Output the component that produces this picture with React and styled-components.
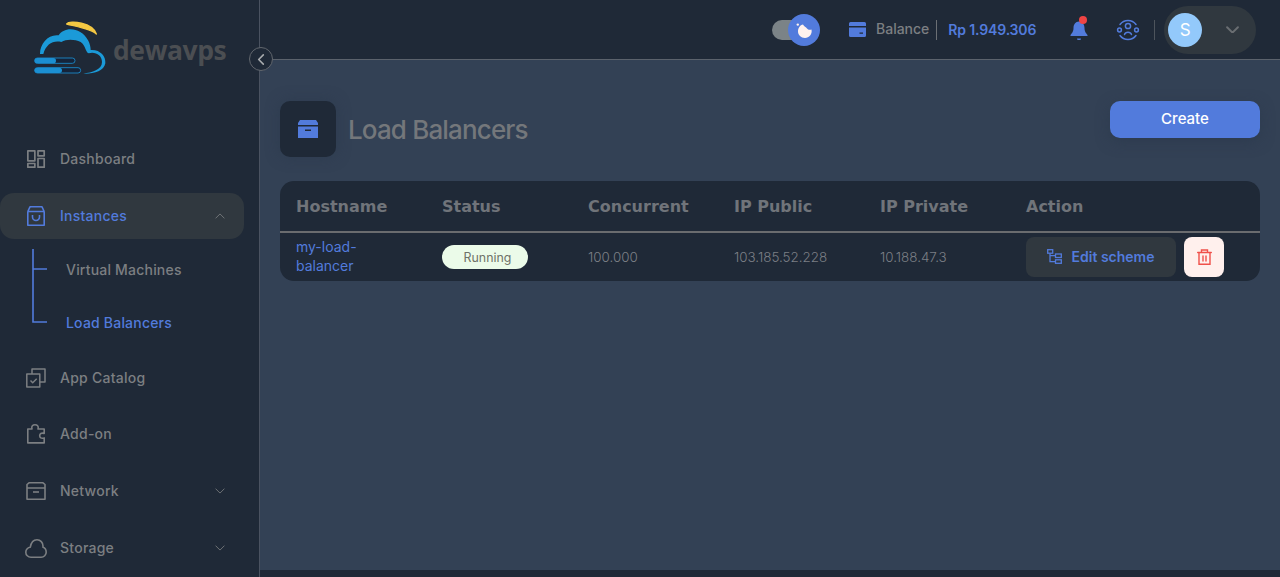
import React from 'react';
import styled, { createGlobalStyle } from 'styled-components';

const Global = createGlobalStyle`
  html, body { margin: 0; padding: 0; height: 100%; overflow: hidden; background: #334155; }
  * { box-sizing: border-box; }
`;
const BLUE = '#527bdc';
const GRAY = '#7c7f82';
const BASE = '#1f2937';

const Page = styled.div`
  display: flex; height: 577px; width: 1280px; position: relative;
  font-family: Inter, "Liberation Sans", sans-serif; font-size: 14px; color: ${GRAY};
`;
const Sidebar = styled.aside`
  width: 260px; flex: none; background: ${BASE}; border-right: 1px solid #4a5260; overflow: hidden;
`;
const LogoRow = styled.div`
  height: 136px; padding: 20px 0 0 34px; display: flex; align-items: flex-start; gap: 5px;
`;
const LogoText = styled.span`
  font-family: "Open Sans", sans-serif; font-weight: 700; font-size: 26.5px; line-height: 1; letter-spacing: -0.4px;
  color: #4b4e52; margin-top: 17px;
`;
const NavItem = styled.div`
  height: 46px; width: 244px; display: flex; align-items: center; padding: 0 19px 0 26px; gap: 14px;
  border-radius: 14px; margin-bottom: ${p => p.$mb ?? 11}px;
  background: ${p => (p.$active ? '#30383f' : 'transparent')};
  color: ${p => (p.$active ? BLUE : GRAY)};
`;
const NavLabel = styled.span`flex: 1; font-weight: 500; letter-spacing: .25px; padding-bottom: 2px;`;
const IconSlot = styled.span`
  width: 20px; height: 22px; flex: none; display: flex; align-items: center; justify-content: center;
  svg { display: block; overflow: visible; }
`;
const SubNav = styled.div`
  position: relative; margin-bottom: 10px; height: 106px; padding: 4px 0 0 66px; letter-spacing: .2px;
`;
const SubItem = styled.div`
  height: 53px; display: flex; align-items: center; font-weight: 500;
  color: ${p => (p.$active ? BLUE : GRAY)};
`;
const Tree = styled.svg`position: absolute; left: 32px; top: 10px;`;
const Collapse = styled.button`
  position: absolute; z-index: 2; left: 249px; top: 47px; width: 24px; height: 24px; border-radius: 50%; padding: 0;
  background: ${BASE}; border: 1px solid #62676e; display: flex; align-items: center; justify-content: center; color: #a8abae;
`;
const Content = styled.div`flex: 1; display: flex; flex-direction: column; min-width: 0;`;
const TopBar = styled.header`
  height: 60px; flex: none; background: ${BASE}; border-bottom: 1px solid #5b626c;
  display: flex; align-items: center; padding: 0 24px 0 512px;
`;
const ThemeToggle = styled.div`
  width: 49px; height: 32px; position: relative; margin-right: 28px; flex: none;
`;
const Track = styled.div`
  position: absolute; left: 0; top: 6px; width: 30px; height: 20px; border-radius: 10px; background: #7b8387;
`;
const Knob = styled.div`
  position: absolute; left: 16px; top: 0; width: 32px; height: 32px; border-radius: 50%; background: ${BLUE};
  display: flex; align-items: center; justify-content: center;
`;
const BalanceLabel = styled.span`margin-left: 10px; padding-bottom: 2px; font-weight: 500; color: ${GRAY};`;
const Divider = styled.span`
  width: 1px; height: 20px; background: ${p => p.$c || '#6b6f74'}; margin: ${p => p.$m || '0 11px 0 7px'}; flex: none;
`;
const Amount = styled.span`color: ${BLUE}; font-weight: 600; white-space: nowrap; letter-spacing: -.15px; padding-bottom: 1px;`;
const TopIcon = styled.span`
  display: flex; flex: none; margin-left: ${p => p.$ml}px; position: relative;
`;
const Dot = styled.span`
  position: absolute; top: -3px; right: 2px; width: 8px; height: 8px; border-radius: 50%; background: #ef4444;
`;
const UserPill = styled.div`
  width: 92px; height: 48px; border-radius: 24px; background: #30383f; display: flex; align-items: center;
  padding-left: 4px; gap: 24px; flex: none;
`;
const Avatar = styled.div`
  width: 34px; height: 34px; border-radius: 50%; background: #93c9fb; color: #fff; font-size: 17px;
  display: flex; align-items: center; justify-content: center; flex: none;
`;
const Main = styled.main`
  flex: 1; min-height: 0; background: #334155; padding: 41px 20px 0;
  border-bottom: 7px solid ${BASE};
`;
const TitleRow = styled.div`display: flex; justify-content: space-between; align-items: flex-start; margin-bottom: 24px;`;
const TitleGroup = styled.div`display: flex; align-items: center; gap: 12px;`;
const TitleIcon = styled.div`
  width: 56px; height: 56px; border-radius: 10px; background: ${BASE}; display: flex; align-items: center; justify-content: center;
  box-shadow: 0 0 14px rgba(40, 54, 74, .5);
`;
const Title = styled.h1`
  margin: 0; font-size: 26px; font-weight: 500; color: #74777b; letter-spacing: -0.85px;
`;
const CreateButton = styled.button`
  width: 150px; height: 37px; border: 0; border-radius: 10px; background: ${BLUE}; color: #fff; padding: 0 0 2px;
  font: 500 15px Inter, sans-serif; box-shadow: 0 4px 14px rgba(40, 54, 74, .5);
`;
const TableCard = styled.div`
  background: ${BASE}; border-radius: 14px; overflow: hidden;
`;
const Table = styled.table`
  width: 100%; border-collapse: collapse; table-layout: fixed;
`;
const Th = styled.th`
  height: 51px; text-align: left; padding: 0 16px; width: ${p => p.$w || 146}px;
  font: 700 16px "DejaVu Sans", sans-serif; color: #70747a; border-bottom: 2px solid #6a6c6f;
`;
const Td = styled.td`
  height: 49px; padding: 0 16px; font-size: 13.4px; font-weight: 300; line-height: 19px; color: #7b7f85;
`;
const HostLink = styled.a`color: ${BLUE}; font-size: 14px; font-weight: 400; display: block; width: 80px; margin-top: -2px;`;
const Pill = styled.span`
  display: flex; width: 86px; height: 24px; border-radius: 12px; background: #ebfbe9; color: #6f7268; font-size: 12.4px; font-weight: 400;
  align-items: center; justify-content: center; padding-left: 5px;
`;
const Actions = styled.div`display: flex; gap: 8px;`;
const EditButton = styled.button`
  width: 150px; height: 40px; border: 0; border-radius: 8px; background: #30383f; color: ${BLUE};
  display: flex; align-items: center; justify-content: center; gap: 10px; font: 600 14px Inter, sans-serif; padding: 0 1px 1px 0;
`;
const DeleteButton = styled.button`
  width: 40px; height: 40px; border: 0; border-radius: 8px; background: #fff0ed; display: flex; align-items: center; justify-content: center; padding: 0;
`;

const S = { fill: 'none', stroke: 'currentColor', strokeWidth: 1.6, strokeLinecap: 'round', strokeLinejoin: 'round' };

const Logo = () => (
  <svg width="74" height="55" viewBox="42 30 222 165">
    <path d="M60 132C60 100 85 72 116 76 130 50 182 48 205 92 210 102 212 112 212 120 240 118 258 138 256 160 252 184 222 192 190 191 216 187 246 180 246 156 246 136 226 124 206 130 196 126 198 108 182 96 165 88 140 86 124 96 100 90 78 102 70 132Z" fill="#1b9ad8" />
    <path d="M140 42C150 30 218 38 229 72 215 58 170 50 140 42Z" fill="#f4c843" stroke="#f4c843" strokeWidth="4" strokeLinejoin="round" />
    <rect x="44" y="144" width="121" height="16" rx="8" fill="#15243a" stroke="#1b8fd2" strokeWidth="2.500" />
    <rect x="44" y="144" width="64" height="16" rx="8" fill="#1b8fd2" />
    <rect x="44" y="173" width="138" height="16" rx="8" fill="#15243a" stroke="#1b8fd2" strokeWidth="2.500" />
    <rect x="44" y="173" width="82" height="16" rx="8" fill="#1b8fd2" />
  </svg>
);
const Dashboard = () => (
  <svg width="18" height="18" viewBox="0 0 18 18" {...S} strokeLinecap="butt" strokeWidth="1.7">
    <rect x=".85" y=".85" width="7" height="10" /><rect x="11" y=".85" width="6.200" height="5" />
    <rect x=".85" y="13.500" width="7" height="3.700" /><rect x="11" y="8.500" width="6.200" height="8.700" />
  </svg>
);
const Bag = () => (
  <svg width="18" height="20" viewBox="0 0 18 20" {...S} strokeLinecap="butt">
    <path d="M.8 5.500h16.400v13.700H.8ZM.8 5.500 3 .8h12l2.200 4.700" /><path d="M5.500 9v2a3.500 3.500 0 0 0 7 0V9" />
  </svg>
);
const Catalog = () => (
  <svg width="20" height="20" viewBox="0 0 20 20" {...S} strokeLinecap="butt" strokeWidth="1.500">
    <rect x=".8" y="6" width="13" height="13" /><path d="M6 6V1h13v13h-5" /><path d="m4.500 12.500 2.200 2.200 4-4" />
  </svg>
);
const Puzzle = () => (
  <svg width="18" height="20" viewBox="0 0 18 20" {...S} strokeLinecap="butt">
    <path d="M.8 5h4.200c-1-3 1-4.200 3-4.200S12 2 11 5h6.200v4.500c-3-1-4.500.3-4.500 2.200s1.500 3.200 4.500 2.200v5H.8Z" />
  </svg>
);
const Box = ({ size = 20 }) => (
  <svg width={size} height={size * 18 / 20} viewBox="0 0 20 18" {...S} strokeLinecap="butt">
    <path d="M1 6V2.500L3 .8h14l2 1.700V6ZM1 6v11.200h18V6" /><path d="M7 10h6" />
  </svg>
);
const Cloud = () => (
  <svg width="22" height="19" viewBox="0 0 22 19" {...S}>
    <path d="M6 18.200C3 18.200.8 16 .8 13.200.8 10.400 3 8.300 5.300 8.200 6 4 8.500.8 12 .8c3.500 0 6 2.700 6 6.200 0 .5 0 .8 0 1.200 2 .6 3.200 2.500 3.200 5 0 2.800-2.300 5-5 5Z" />
  </svg>
);
const Chevron = ({ up, w = 10, color = GRAY, sw = 1 }) => (
  <svg width={w} height={w * 0.6} viewBox="0 0 12 7" fill="none" stroke={color} strokeWidth={sw} strokeLinecap="round" strokeLinejoin="round">
    <path d={up ? 'M1 6l5-5 5 5' : 'M1 1l5 5 5-5'} />
  </svg>
);

const columns = ['Hostname', 'Status', 'Concurrent', 'IP Public', 'IP Private', 'Action'];

export default function App() {
  return (
    <Page>
      <Global />
      <Sidebar>
        <LogoRow><Logo /><LogoText>dewavps</LogoText></LogoRow>
        <NavItem><IconSlot><Dashboard /></IconSlot><NavLabel>Dashboard</NavLabel></NavItem>
        <NavItem $active $mb={0}><IconSlot><Bag /></IconSlot><NavLabel>Instances</NavLabel><Chevron up /></NavItem>
        <SubNav>
          <Tree width="16" height="76" viewBox="0 0 16 76" fill="none" stroke={BLUE} strokeWidth="1.600">
            <path d="M1 0v73h14M1 20h14" />
          </Tree>
          <SubItem>Virtual Machines</SubItem>
          <SubItem $active>Load Balancers</SubItem>
        </SubNav>
        <NavItem $mb={10}><IconSlot><Catalog /></IconSlot><NavLabel>App Catalog</NavLabel></NavItem>
        <NavItem><IconSlot><Puzzle /></IconSlot><NavLabel>Add-on</NavLabel></NavItem>
        <NavItem><IconSlot><Box /></IconSlot><NavLabel>Network</NavLabel><Chevron /></NavItem>
        <NavItem><IconSlot><Cloud /></IconSlot><NavLabel>Storage</NavLabel><Chevron /></NavItem>
      </Sidebar>
      <Collapse aria-label="Collapse">
        <svg width="8" height="11" viewBox="0 0 8 12" fill="none" stroke="currentColor" strokeWidth="1.700" strokeLinecap="round" strokeLinejoin="round"><path d="M6.500 1 1.500 6l5 5" /></svg>
      </Collapse>
      <Content>
        <TopBar>
          <ThemeToggle>
            <Track />
            <Knob>
              <svg width="18" height="18" viewBox="0 0 18 18" fill="#fff2ee">
                <path d="M8 3.500C9 5.500 11 6 12 7.500 13 9 15 9 16.500 8.500 17.500 13 14 17 10 17 6 17 3 14 3 10.500 3 7 5 4 8 3.500Z" /><circle cx="2.800" cy="3.600" r="1.200" />
              </svg>
            </Knob>
          </ThemeToggle>
          <TopIcon $ml={0}>
            <svg width="17" height="15" viewBox="0 0 17 15" fill={BLUE}>
              <path d="M0 1.500A1.500 1.500 0 0 1 1.500 0h14A1.500 1.500 0 0 1 17 1.500V4H0ZM0 5.500h17v8A1.500 1.500 0 0 1 15.500 15h-14A1.500 1.500 0 0 1 0 13.500ZM10.500 10.500v1.300h3.500v-1.300Z" fillRule="evenodd" />
            </svg>
          </TopIcon>
          <BalanceLabel>Balance</BalanceLabel>
          <Divider />
          <Amount>Rp 1.949.306</Amount>
          <TopIcon $ml={33}>
            <svg width="20" height="22" viewBox="0 0 20 22" fill={BLUE}>
              <path d="M10 2.500c3.500 0 5.500 3 5.500 6.500 0 4 2 5.500 3 7v1H1.500v-1c1-1.500 3-3 3-7 0-3.500 2-6.500 5.500-6.500ZM8 19.500h4l-.5 1.500h-3Z" />
            </svg>
            <Dot />
          </TopIcon>
          <TopIcon $ml={27}>
            <svg width="24" height="22" viewBox="0 0 24 22" fill="none" stroke={BLUE} strokeWidth="1.500" strokeLinecap="round">
              <circle cx="12" cy="7" r="2.600" /><circle cx="3.500" cy="11" r="1.900" /><circle cx="20.500" cy="11" r="1.900" />
              <path d="M4 5.500A10 10 0 0 1 20 5.500M4 16.500A10 10 0 0 0 20 16.500M8.500 15.500c1-3 6-3 7 0" />
            </svg>
          </TopIcon>
          <Divider $c="#4d545c" $m="0 9px 0 14px" />
          <UserPill>
            <Avatar>S</Avatar>
            <Chevron w={13} sw={1.800} color="#6a6e72" />
          </UserPill>
        </TopBar>
        <Main>
          <TitleRow>
            <TitleGroup>
              <TitleIcon>
                <svg width="20" height="18" viewBox="0 0 20 18" fill={BLUE}>
                  <path d="M0 5V3L2 0h16l2 3v2ZM0 6.500h20V18H0ZM7 9.500v1.500h6V9.500Z" fillRule="evenodd" />
                </svg>
              </TitleIcon>
              <Title>Load Balancers</Title>
            </TitleGroup>
            <CreateButton>Create</CreateButton>
          </TitleRow>
          <TableCard>
            <Table>
              <thead>
                <tr>{columns.map(c => <Th key={c} $w={c === 'Action' ? 250 : 146}>{c}</Th>)}</tr>
              </thead>
              <tbody>
                <tr>
                  <Td><HostLink>my-load-balancer</HostLink></Td>
                  <Td><Pill>Running</Pill></Td>
                  <Td>100.000</Td>
                  <Td>103.185.52.228</Td>
                  <Td>10.188.47.3</Td>
                  <Td>
                    <Actions>
                      <EditButton>
                        <svg width="15" height="15" viewBox="0 0 15 15" fill="none" stroke={BLUE} strokeWidth="1.300">
                          <rect x=".7" y=".7" width="5" height="3.500" /><rect x="8.500" y="5" width="5.800" height="3.500" /><rect x="8.500" y="10.800" width="5.800" height="3.500" />
                          <path d="M3 4.200v8.500h5.500M3 6.700h5.500" />
                        </svg>
                        Edit scheme
                      </EditButton>
                      <DeleteButton aria-label="Delete">
                        <svg width="15" height="16" viewBox="0 0 15 16" fill="none" stroke="#f0504a" strokeWidth="1.400" strokeLinecap="round">
                          <path d="M.7 3.500h13.600M4.500 3.500V1h6v2.500M2 3.500v11.800h11V3.500M6 7v5M9 7v5" />
                        </svg>
                      </DeleteButton>
                    </Actions>
                  </Td>
                </tr>
              </tbody>
            </Table>
          </TableCard>
        </Main>
      </Content>
    </Page>
  );
}
